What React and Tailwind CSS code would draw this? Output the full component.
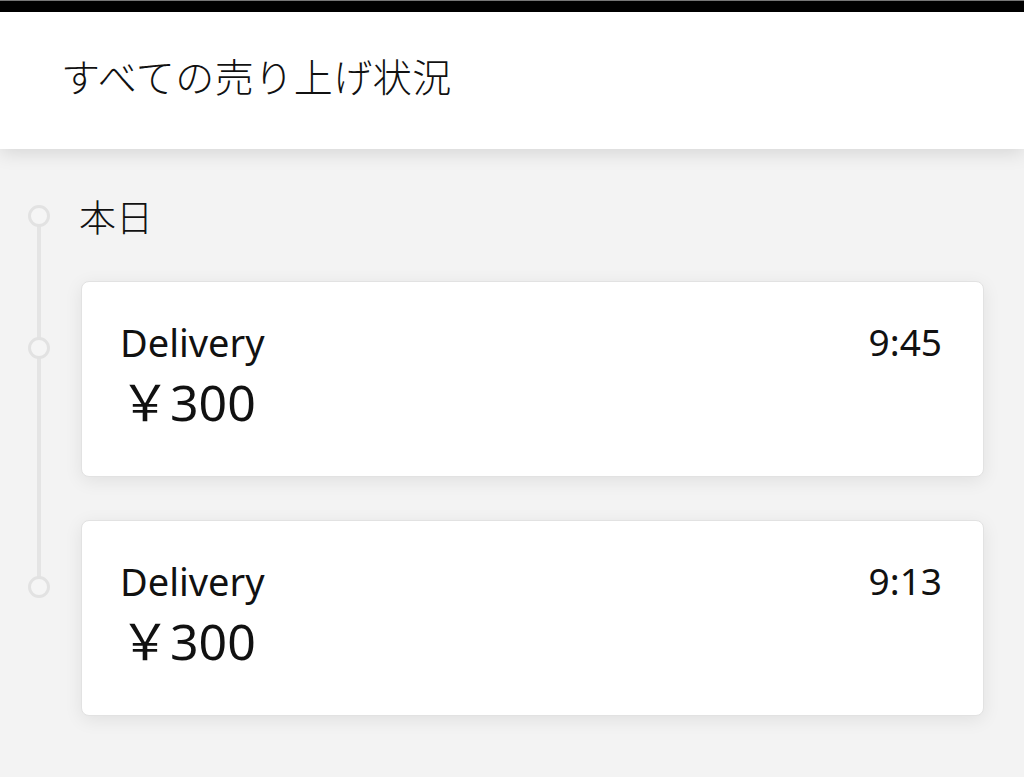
const sales = [
  { id: 1, label: "Delivery", amount: "￥300", time: "9:45" },
  { id: 2, label: "Delivery", amount: "￥300", time: "9:13" },
];

function Dot() {
  return <div className="relative z-10 h-[22px] w-[22px] rounded-full border-[3px] border-[#e2e2e2] bg-[#f5f5f5]" />;
}

function SaleCard({ sale }) {
  return (
    <div className="flex">
      <div className="w-[81px] shrink-0 pl-[28px] pt-[56px]">
        <Dot />
      </div>
      <div className="mr-[40px] h-[196px] flex-1 rounded-[8px] border border-[#e2e2e2] bg-white pl-[38px] pr-[41px] pt-[38px] shadow-[0_4px_18px_rgba(0,0,0,0.08)]">
        <div className="flex items-start justify-between text-[37px] leading-[44px]">
          <span className="text-[38px]">{sale.label}</span>
          <span>{sale.time}</span>
        </div>
        <div className="mt-[10px] text-[50px] leading-[56px]">{sale.amount}</div>
      </div>
    </div>
  );
}

export default function App() {
  return (
    <div
      className="flex h-[777px] w-[1024px] flex-col overflow-hidden bg-[#f3f3f3] text-[#111]"
      style={{ fontFamily: '"Noto Sans", "Noto Sans CJK JP", sans-serif' }}
    >
      <div className="h-[12px] shrink-0 border-t border-[#777] bg-black" />
      <header className="relative z-20 flex h-[137px] shrink-0 items-center bg-white pb-[10px] pl-[61px] shadow-[0_4px_18px_rgba(0,0,0,0.12)]">
        <h1 className="text-[39px] font-light leading-none tracking-[0.5px]" style={{ fontFamily: '"Noto Sans CJK JP", sans-serif' }}>
          すべての売り上げ状況
        </h1>
      </header>

      <main className="relative flex flex-col gap-[43px] pt-[45px]">
        <div className="absolute left-[37px] top-[68px] h-[370px] w-[4px] bg-[#e4e4e4]" />
        <div className="flex items-center">
          <div className="w-[79px] shrink-0 pl-[28px]">
            <Dot />
          </div>
          <div className="text-[37px] font-light leading-[44px]" style={{ fontFamily: '"Noto Sans CJK JP", sans-serif' }}>
            本日
          </div>
        </div>
        {sales.map((sale) => (
          <SaleCard key={sale.id} sale={sale} />
        ))}
      </main>
    </div>
  );
}
